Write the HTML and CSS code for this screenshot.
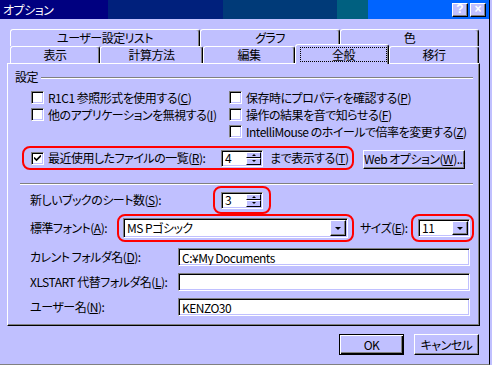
FILE: index.html
```html
<!DOCTYPE html>
<html lang="ja">
<head>
  <meta charset="UTF-8" />
  <title>オプション</title>
  <link rel="stylesheet" href="styles.css">
</head>
<body>

<div class="window">
  <div class="titlebar">
    <span class="title">オプション</span>
    <div class="caption-btns">
      <button class="cap">?</button>
      <button class="cap">×</button>
    </div>
  </div>

  <div class="tabs">
    <div class="tabrow">
      <div class="tab w-user">ユーザー設定リスト</div>
      <div class="tab w-graph">グラフ</div>
      <div class="tab w-color">色</div>
    </div>
    <div class="tabrow">
      <div class="tab w-view">表示</div>
      <div class="tab w-calc">計算方法</div>
      <div class="tab w-edit">編集</div>
      <div class="tab w-general selected"><span class="focus">全般</span></div>
      <div class="tab w-move">移行</div>
    </div>
  </div>

  <div class="panel">
    <div class="group-head"><span>設定</span><div class="etch"></div></div>

    <div class="checks">
      <label class="chk"><span class="box"></span><span class="chk-text">R1C1 参照形式を使用する(<u>C</u>)</span></label>
      <label class="chk"><span class="box"></span><span class="chk-text">保存時にプロパティを確認する(<u>P</u>)</span></label>
      <label class="chk"><span class="box"></span><span class="chk-text">他のアプリケーションを無視する(<u>I</u>)</span></label>
      <label class="chk"><span class="box"></span><span class="chk-text">操作の結果を音で知らせる(<u>F</u>)</span></label>
      <div></div>
      <label class="chk"><span class="box"></span><span class="chk-text">IntelliMouse のホイールで倍率を変更する(<u>Z</u>)</span></label>
    </div>

    <div class="recent-row">
      <div class="mark mark-recent">
        <span class="box checked">
          <svg width="7" height="7" viewBox="0 0 7 7"><path d="M0 2.5 L2.5 5 L7 0.5" stroke="#000" stroke-width="1.6" fill="none"/></svg>
        </span>
        <span class="recent-label">最近使用したファイルの一覧(<u>R</u>):</span>
        <div class="spin sunken">
          <input type="text" value="4">
          <div class="spin-btns"><span class="up"></span><span class="down"></span></div>
        </div>
        <span class="after">まで表示する(<u>T</u>)</span>
      </div>
      <button class="btn web-btn">Web オプション(<u>W</u>)...</button>
    </div>

    <div class="sep"></div>

    <div class="opt-row">
      <span class="lbl-sheets">新しいブックのシート数(<u>S</u>):</span>
      <div class="mark mark-sheets">
        <div class="spin sunken">
          <input type="text" value="3">
          <div class="spin-btns"><span class="up"></span><span class="down"></span></div>
        </div>
      </div>
    </div>

    <div class="opt-row">
      <span class="lbl-font">標準フォント(<u>A</u>):</span>
      <div class="mark mark-font">
        <div class="combo combo-font sunken"><span>MS Pゴシック</span><div class="drop"></div></div>
      </div>
      <span class="lbl-size">サイズ(<u>E</u>):</span>
      <div class="mark mark-size">
        <div class="combo combo-size sunken"><span>11</span><div class="drop"></div></div>
      </div>
    </div>

    <div class="fields">
      <div class="field-row">
        <span class="lbl">カレント フォルダ名(<u>D</u>):</span>
        <input class="text sunken" type="text" value="C:¥My Documents">
      </div>
      <div class="field-row">
        <span class="lbl">XLSTART 代替フォルダ名(<u>L</u>):</span>
        <input class="text sunken" type="text" value="">
      </div>
      <div class="field-row">
        <span class="lbl">ユーザー名(<u>N</u>):</span>
        <input class="text sunken" type="text" value="KENZO30">
      </div>
    </div>
  </div>

  <div class="footer">
    <button class="btn default">OK</button>
    <button class="btn">キャンセル</button>
  </div>
</div>

</body>
</html>
```

FILE: styles.css
```css
:root {
  --face: #c0c0ff;
  --shadow: #808080;
  --dark: #000000;
  --light: #ffffff;
  --mark: #ff0000;
}

* {
  box-sizing: border-box;
}

body {
  margin: 0;
  overflow: hidden;
  background: var(--face);
  font-family: "Noto Sans CJK JP", sans-serif;
  font-size: 12px;
  line-height: 14px;
  letter-spacing: -0.5px;
  color: #000;
  font-feature-settings: "palt";
}

button, input {
  font: inherit;
  letter-spacing: inherit;
  color: inherit;
  margin: 0;
  padding: 0;
}

.window {
  width: 490px;
  height: 365px;
  background: var(--face);
  border-right: 1px solid var(--dark);
  border-bottom: 1px solid var(--shadow);
  display: flex;
  flex-direction: column;
}

/* title bar */
.titlebar {
  flex: none;
  height: 19px;
  display: flex;
  align-items: center;
  justify-content: space-between;
  padding: 0 3px 0 3px;
  color: #fff;
  background: linear-gradient(to right,
    #000080 0, #000080 108px,
    #00207c 108px, #00207c 223px,
    #003a78 223px, #003a78 337px,
    #006080 337px, #006080 368px,
    #0064ff 368px);
}

.caption-btns {
  display: flex;
  gap: 2px;
}

.cap {
  width: 16px;
  height: 14px;
  background: var(--face);
  border: 1px solid;
  border-color: var(--light) var(--dark) var(--dark) var(--light);
  box-shadow: inset -1px -1px var(--shadow);
  font-family: "Liberation Sans", sans-serif;
  font-weight: bold;
  font-size: 12px;
  line-height: 11px;
  letter-spacing: 0;
}

/* tabs */
.tabs {
  flex: none;
  margin-top: 10px;
  padding-left: 10px;
}

.tabrow {
  display: flex;
  height: 17px;
}

.tab {
  height: 17px;
  background: var(--face);
  border: 1px solid;
  border-bottom: none;
  border-color: var(--light) var(--dark) transparent var(--light);
  border-radius: 3px 3px 0 0;
  box-shadow: inset -1px 0 var(--shadow);
  text-align: center;
  line-height: 15px;
  white-space: nowrap;
}

.w-user { width: 190px; }
.w-graph { width: 140px; }
.w-color { width: 139px; }
.w-view { width: 90px; }
.w-calc { width: 103px; }
.w-edit { width: 92px; }
.w-general { width: 94px; }
.w-move { width: 90px; }

.tab.selected {
  position: relative;
  z-index: 1;
  height: 20px;
  margin-top: -2px;
}

.focus {
  display: block;
  height: 15px;
  margin: 2px 1px 0 4px;
  border: 1px dotted #000;
  line-height: 13px;
}

/* panel */
.panel {
  flex: none;
  margin-left: 7px;
  width: 473px;
  height: 263px;
  border: 1px solid;
  border-color: var(--light) var(--dark) var(--dark) var(--light);
  box-shadow: inset -1px -1px var(--shadow);
  display: flex;
  flex-direction: column;
}

.group-head {
  margin-top: 5px;
  height: 16px;
  display: flex;
  align-items: center;
  padding: 0 6px 0 7px;
}

.etch {
  flex: 1;
  margin-left: 3px;
  margin-top: 2px;
  border-top: 1px solid var(--shadow);
  border-bottom: 1px solid var(--light);
}

.checks {
  margin-top: 4px;
  padding-left: 23px;
  display: grid;
  grid-template-columns: 198px 1fr;
  grid-auto-rows: 17px;
}

.chk {
  display: flex;
  align-items: center;
  white-space: nowrap;
}

.chk-text {
  margin-left: 4px;
}

.box {
  flex: none;
  width: 13px;
  height: 13px;
  background: #fff;
  border: 1px solid;
  border-color: var(--shadow) var(--light) var(--light) var(--shadow);
  box-shadow: inset 1px 1px var(--dark), inset -1px -1px var(--face);
  display: flex;
  align-items: center;
  justify-content: center;
}

.box svg {
  display: block;
}

/* red marks */
.mark {
  flex: none;
  display: flex;
  align-items: center;
  border: 2px solid var(--mark);
  border-radius: 8px;
}

.recent-row {
  margin-top: 6px;
  margin-left: 14px;
  height: 24px;
  display: flex;
  align-items: center;
}

.mark-recent {
  width: 332px;
  height: 24px;
  padding-left: 7px;
}

.recent-label {
  width: 173px;
  margin-left: 4px;
  white-space: nowrap;
}

.after {
  margin-left: 7px;
  white-space: nowrap;
}

/* sunken fields */
.sunken {
  background: #fff;
  border: 1px solid;
  border-color: var(--shadow) var(--light) var(--light) var(--shadow);
  box-shadow: inset 1px 1px var(--dark), inset -1px -1px var(--face);
}

.spin {
  flex: none;
  width: 42px;
  height: 17px;
  display: flex;
}

.spin input {
  width: 24px;
  border: none;
  outline: none;
  background: transparent;
  padding-left: 3px;
  line-height: 14px;
}

.spin-btns {
  margin: 1px 1px 1px auto;
  width: 15px;
  display: flex;
  flex-direction: column;
}

.spin-btns span {
  flex: 1;
  background: var(--face);
  border: 1px solid;
  border-color: var(--light) var(--dark) var(--dark) var(--light);
  display: flex;
  align-items: center;
  justify-content: center;
}

.spin-btns .up::after {
  content: "";
  border-left: 2px solid transparent;
  border-right: 2px solid transparent;
  border-bottom: 2px solid #000;
}

.spin-btns .down::after {
  content: "";
  border-left: 2px solid transparent;
  border-right: 2px solid transparent;
  border-top: 2px solid #000;
}

.sep {
  margin-top: 13px;
  margin-left: 12px;
  width: 453px;
  border-top: 1px solid var(--shadow);
  border-bottom: 1px solid var(--light);
}

.opt-row {
  height: 28px;
  padding-left: 22px;
  display: flex;
  align-items: center;
  white-space: nowrap;
}

.sep + .opt-row {
  margin-top: 1px;
}

.lbl-sheets { width: 183px; }
.lbl-font { width: 87px; }
.lbl-size { width: 51px; margin-left: 6px; }

.mark-sheets {
  width: 58px;
  height: 28px;
  padding-left: 6px;
}

.mark-font {
  width: 237px;
  height: 28px;
  padding-left: 4px;
}

.mark-size {
  width: 63px;
  height: 28px;
  padding-left: 5px;
}

.combo {
  flex: none;
  display: flex;
  align-items: center;
}

.combo span {
  flex: 1;
  padding-left: 3px;
}

.combo-font {
  width: 225px;
  height: 20px;
}

.combo-size {
  width: 52px;
  height: 18px;
}

.drop {
  align-self: stretch;
  width: 16px;
  margin: 1px;
  background: var(--face);
  border: 1px solid;
  border-color: var(--light) var(--dark) var(--dark) var(--light);
  box-shadow: inset -1px -1px var(--shadow);
  display: flex;
  align-items: center;
  justify-content: center;
}

.drop::after {
  content: "";
  border-left: 3px solid transparent;
  border-right: 3px solid transparent;
  border-top: 3px solid #000;
}

.fields {
  margin-top: 6px;
  padding-left: 22px;
  display: flex;
  flex-direction: column;
  gap: 7px;
}

.field-row {
  height: 18px;
  display: flex;
  align-items: center;
  white-space: nowrap;
}

.field-row .lbl {
  width: 148px;
}

.text {
  width: 292px;
  height: 18px;
  padding-left: 3px;
  outline: none;
}

/* buttons */
.btn {
  height: 21px;
  background: var(--face);
  border: 1px solid;
  border-color: var(--light) var(--dark) var(--dark) var(--light);
  box-shadow: inset -1px -1px var(--shadow);
  white-space: nowrap;
  cursor: pointer;
}

.web-btn {
  width: 102px;
  height: 19px;
  margin-left: 9px;
  margin-top: 2px;
}

.footer {
  margin-top: 8px;
  padding-right: 10px;
  display: flex;
  justify-content: flex-end;
  gap: 10px;
}

.footer .btn {
  width: 65px;
}

.btn.default {
  border-color: var(--dark);
  box-shadow: inset 1px 1px var(--light), inset -1px -1px var(--dark), inset -2px -2px var(--shadow);
}
```
